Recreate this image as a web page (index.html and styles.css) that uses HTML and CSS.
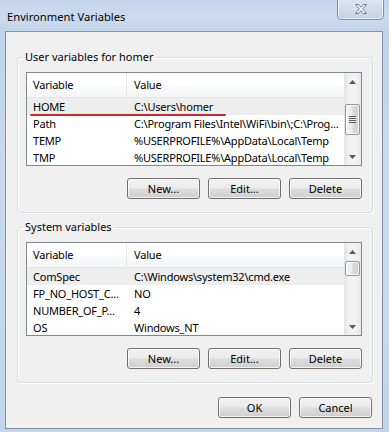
FILE: index.html
```html
<!DOCTYPE html>
<html>
<head>
<meta charset="utf-8">
<link rel="stylesheet" href="styles.css">
</head>
<body>
<div class="window">
  <div class="titlebar">
    <span class="title">Environment Variables</span>
    <div class="close">
      <svg width="14" height="12" viewBox="0 0 14 12">
        <path d="M1.5 1.5 H4.5 L7 4.3 L9.5 1.5 H12.5 L8.6 6 L12.5 10.5 H9.5 L7 7.7 L4.5 10.5 H1.5 L5.4 6 Z" fill="#ffffff" stroke="#6c7a90" stroke-width="1" stroke-linejoin="round"/>
      </svg>
    </div>
  </div>
  <div class="client">
    <fieldset class="group">
      <legend>User variables for homer</legend>
      <div class="list">
        <div class="list-main">
          <div class="header">
            <div class="c1">Variable</div>
            <div class="c2">Value</div>
          </div>
          <div class="row sel"><div class="c1">HOME</div><div class="c2">C:\Users\homer</div></div>
          <div class="row"><div class="c1">Path</div><div class="c2">C:\Program Files\Intel\WiFi\bin\;C:\Prog...</div></div>
          <div class="row"><div class="c1">TEMP</div><div class="c2">%USERPROFILE%\AppData\Local\Temp</div></div>
          <div class="row"><div class="c1">TMP</div><div class="c2">%USERPROFILE%\AppData\Local\Temp</div></div>
        </div>
        <div class="scrollbar">
          <div class="arrow up"><svg width="7" height="4" viewBox="0 0 7 4"><path d="M0 4 L3.5 0 L7 4 Z" fill="#5a5a5a"/></svg></div>
          <div class="track"><div class="thumb thumb-user"><span class="grip"></span></div></div>
          <div class="arrow down"><svg width="7" height="4" viewBox="0 0 7 4"><path d="M0 0 L7 0 L3.5 4 Z" fill="#5a5a5a"/></svg></div>
        </div>
      </div>
      <div class="buttons">
        <button class="btn">New...</button>
        <button class="btn">Edit...</button>
        <button class="btn">Delete</button>
      </div>
    </fieldset>
    <fieldset class="group group-system">
      <legend>System variables</legend>
      <div class="list">
        <div class="list-main">
          <div class="header">
            <div class="c1">Variable</div>
            <div class="c2">Value</div>
          </div>
          <div class="row sel"><div class="c1">ComSpec</div><div class="c2">C:\Windows\system32\cmd.exe</div></div>
          <div class="row"><div class="c1">FP_NO_HOST_C...</div><div class="c2">NO</div></div>
          <div class="row"><div class="c1">NUMBER_OF_P...</div><div class="c2">4</div></div>
          <div class="row"><div class="c1">OS</div><div class="c2">Windows_NT</div></div>
        </div>
        <div class="scrollbar">
          <div class="arrow up"><svg width="7" height="4" viewBox="0 0 7 4"><path d="M0 4 L3.5 0 L7 4 Z" fill="#5a5a5a"/></svg></div>
          <div class="track"><div class="thumb thumb-system"></div></div>
          <div class="arrow down"><svg width="7" height="4" viewBox="0 0 7 4"><path d="M0 0 L7 0 L3.5 4 Z" fill="#5a5a5a"/></svg></div>
        </div>
      </div>
      <div class="buttons">
        <button class="btn">New...</button>
        <button class="btn">Edit...</button>
        <button class="btn">Delete</button>
      </div>
    </fieldset>
    <div class="dialog-buttons">
      <button class="btn">OK</button>
      <button class="btn">Cancel</button>
    </div>
  </div>
  <div class="annotation"></div>
</div>
</body>
</html>
```

FILE: styles.css
```css
html, body {
  margin: 0;
  padding: 0;
  background: #c6d8ee;
}
body {
  font-family: "Noto Sans", "Open Sans", sans-serif;
  font-size: 11px;
  color: #000;
}
.window {
  position: relative;
  width: 389px;
  height: 432px;
  overflow: hidden;
  background: linear-gradient(180deg, #bed2ea 0%, #c9daee 40%, #c3d6ec 100%);
  display: flex;
  flex-direction: column;
}
.titlebar {
  height: 31px;
  position: relative;
  display: flex;
  align-items: flex-start;
  background: linear-gradient(180deg, #c4d6ec 0%, #cbdbee 55%, #c2d4ea 100%);
}
.title {
  margin: 9px 0 0 7px;
  line-height: 16px;
  font-size: 11.2px;
}
.close {
  position: absolute;
  left: 337px;
  top: -1px;
  width: 45px;
  height: 20px;
  border: 1px solid #7f92ae;
  border-top: none;
  border-radius: 0 0 5px 5px;
  background: linear-gradient(180deg, #dde6f2 0%, #d0dcec 50%, #c2d2e6 100%);
  box-shadow: inset 0 0 0 1px rgba(255,255,255,0.6);
  display: flex;
  align-items: center;
  justify-content: center;
}
.client {
  margin: 0 6px 0 5px;
  height: 396px;
  border: 1px solid #8592a6;
  background: #f0f0f0;
  display: flex;
  flex-direction: column;
}
.group {
  margin: 17px 9px 0 11px;
  padding: 0 10px 13px 8px;
  border: 1px solid #d5dfe5;
  border-radius: 3px;
  box-shadow: inset 1px 1px 0 #ffffff, 1px 1px 0 #ffffff;
  min-width: 0;
}
.group-system {
  margin-top: 6px;
}
.group legend {
  margin-left: -3px;
  padding: 0 2px;
  line-height: 16px;
}
.list {
  margin-top: 7px;
  height: 92px;
  border: 1px solid #828790;
  background: #fff;
  display: flex;
  overflow: hidden;
  letter-spacing: -0.2px;
}
.list-main {
  flex: 1;
  min-width: 0;
}
.header {
  height: 24px;
  display: flex;
  background: linear-gradient(180deg, #ffffff 0%, #ffffff 55%, #f9fafb 55%, #f5f6f7 100%);
  border-bottom: 1px solid #e5e5e5;
}
.header .c1 {
  border-right: 1px solid #e3e8ee;
}
.header > div {
  line-height: 24px;
}
.c1 {
  width: 93px;
  padding-left: 6px;
  flex: none;
  white-space: nowrap;
  overflow: hidden;
}
.c2 {
  padding-left: 7px;
  white-space: nowrap;
  overflow: hidden;
  flex: 1;
}
.row {
  height: 17px;
  line-height: 18px;
  display: flex;
}
.row .c1 {
  width: 94px;
}
.row.sel {
  background: #eeeeee;
}
.scrollbar {
  width: 17px;
  flex: none;
  display: flex;
  flex-direction: column;
  background: linear-gradient(90deg, #e3e3e3 0%, #f2f2f2 30%, #f2f2f2 70%, #e8e8e8 100%);
}
.arrow {
  height: 17px;
  display: flex;
  align-items: center;
  justify-content: center;
  flex: none;
}
.track {
  flex: 1;
  position: relative;
}
.thumb {
  margin: 0 1px;
  border: 1px solid #979797;
  border-radius: 2px;
  background: linear-gradient(90deg, #f3f3f3 0%, #ececec 45%, #d9d9d9 55%, #d0d0d0 100%);
  box-shadow: inset 0 0 0 1px rgba(255,255,255,0.7);
  display: flex;
  align-items: center;
  justify-content: center;
}
.thumb-user {
  margin-top: 14px;
  height: 29px;
}
.thumb-system {
  margin-top: 1px;
  height: 13px;
}
.grip {
  width: 7px;
  height: 7px;
  background: repeating-linear-gradient(180deg, #5c5c5c 0px, #5c5c5c 1px, #eeeeee 1px, #eeeeee 2px);
}
.buttons {
  margin-top: 12px;
  display: flex;
  justify-content: flex-end;
  gap: 8px;
}
.btn {
  width: 73px;
  height: 21px;
  padding: 0;
  font-family: inherit;
  font-size: 11px;
  color: #000;
  border: 1px solid #707070;
  border-radius: 3px;
  background: linear-gradient(180deg, #f2f2f2 0%, #ebebeb 48%, #dddddd 52%, #cfcfcf 100%);
  box-shadow: inset 0 0 0 1px rgba(255,255,255,0.75);
}
.dialog-buttons {
  margin: 14px 10px 0 0;
  display: flex;
  justify-content: flex-end;
  gap: 8px;
}
.annotation {
  position: absolute;
  left: 30px;
  top: 114px;
  width: 196px;
  height: 2px;
  background: #d3262a;
  border-radius: 1px;
}
```
